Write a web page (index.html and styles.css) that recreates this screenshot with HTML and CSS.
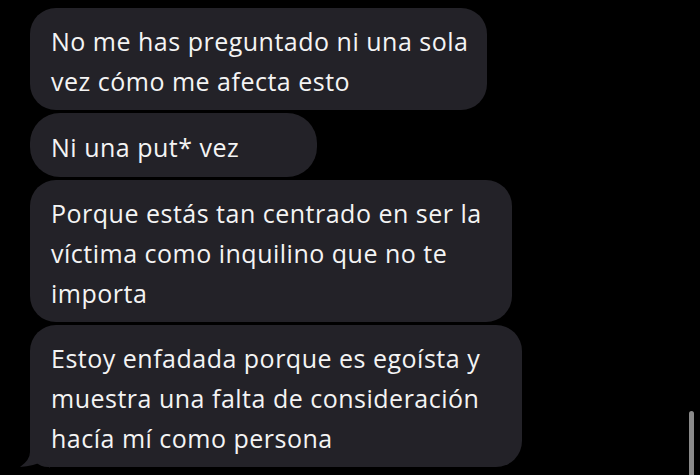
FILE: index.html
```html
<!DOCTYPE html>
<html lang="es">
<head>
<meta charset="utf-8">
<link rel="stylesheet" href="styles.css">
</head>
<body>
<div class="chat">
  <div class="bubble b1">No me has preguntado ni una sola<br>vez cómo me afecta esto</div>
  <div class="bubble b2">Ni una put* vez</div>
  <div class="bubble b3">Porque estás tan centrado en ser la<br>víctima como inquilino que no te<br>importa</div>
  <div class="bubble b4">Estoy enfadada porque es egoísta y<br>muestra una falta de consideración<br>hacía mí como persona
    <svg class="tail" width="30" height="30" viewBox="0 0 30 30"><path d="M10 0 L10 14 Q10 22 0 29 Q14 28 24 23 L30 30 L30 0 Z" fill="#232228"/></svg>
  </div>
</div>
<div class="scrollbar"></div>
</body>
</html>
```
FILE: styles.css
```css
html, body {
  margin: 0;
  padding: 0;
  background: #000;
  width: 700px;
  height: 475px;
  overflow: hidden;
}
.chat {
  display: flex;
  flex-direction: column;
  align-items: flex-start;
  gap: 3px;
  padding: 8px 0 0 30px;
}
.bubble {
  position: relative;
  box-sizing: border-box;
  background: #232228;
  color: #f4f4f4;
  font-family: "Open Sans", sans-serif;
  font-size: 25px;
  letter-spacing: 0.5px;
  line-height: 40px;
  padding: 13px 20px 9px 21px;
  border-radius: 26px;
  white-space: nowrap;
}
.b1 { width: 457px; }
.b2 { width: 287px; border-radius: 30px; padding-top: 14px; padding-bottom: 10px; }
.b3 { width: 482px; }
.b4 { width: 492px; border-bottom-left-radius: 18px; }
.tail {
  position: absolute;
  left: -10px;
  bottom: -1px;
  display: block;
}
.scrollbar {
  position: absolute;
  left: 689px;
  top: 411px;
  width: 5px;
  height: 70px;
  background: #8a8a8a;
  border-radius: 3px 3px 0 0;
}
```
